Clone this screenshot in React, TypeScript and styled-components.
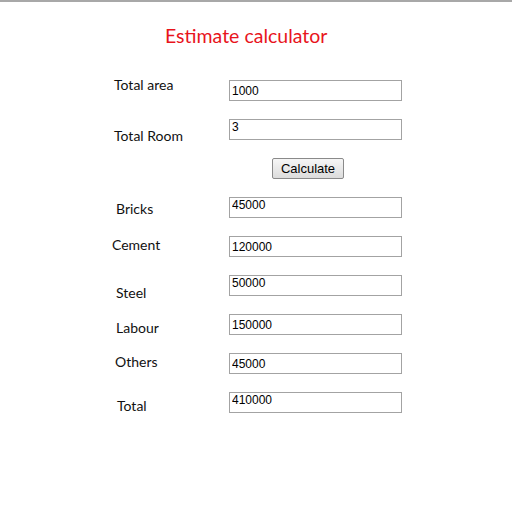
import React from "react";
import styled, { createGlobalStyle } from "styled-components";

const GlobalStyle = createGlobalStyle`
  html, body {
    margin: 0;
    padding: 0;
    background: #ffffff;
  }
`;

const Page = styled.div`
  width: 512px;
  min-height: 512px;
  border-top: 2px solid #a8a8a8;
  box-sizing: border-box;
  font-family: Lato, "Open Sans", sans-serif;
`;

const Title = styled.h2`
  margin: 0;
  padding-top: 21px;
  padding-left: 165px;
  font-family: Lato, "Open Sans", sans-serif;
  font-weight: normal;
  font-size: 19.5px;
  line-height: 26px;
  color: #e8141c;
`;

const Form = styled.div`
  display: grid;
  grid-template-columns: 117px 173px;
  grid-auto-rows: 39px;
  margin-top: 31px;
  margin-left: 112px;
`;

const Label = styled.div<{ $dy: number; $dx: number }>`
  font-family: Lato, "Open Sans", sans-serif;
  font-size: 14px;
  line-height: 20px;
  color: #111;
  margin-top: ${(p) => p.$dy}px;
  padding-left: ${(p) => p.$dx}px;
`;

const Field = styled.input<{ $top?: boolean }>`
  display: block;
  box-sizing: border-box;
  width: 173px;
  height: 21px;
  margin: 0;
  border: 1px solid #a3a3a3;
  padding: ${(p) => (p.$top ? "0 2px 5px" : "1px 2px 0")};
  font-family: "Liberation Sans", Arial, sans-serif;
  font-size: 12px;
  color: #000;
  background: #fff;
  outline: none;
`;

const ButtonCell = styled.div`
  grid-column: 2;
  padding-left: 43px;
`;

const Button = styled.button`
  display: block;
  box-sizing: border-box;
  width: 72px;
  height: 21px;
  padding: 0;
  border: 1px solid #8a8a8a;
  border-radius: 2px;
  background: linear-gradient(#f6f6f6, #dcdcdc);
  font-family: "Liberation Sans", Arial, sans-serif;
  font-size: 13px;
  color: #000;
`;

const rows = [
  { label: "Total area", value: "1000", dy: -5, dx: 2 },
  { label: "Total Room", value: "3", dy: 7, dx: 2, top: true },
];

const results = [
  { label: "Bricks", value: "45000", dy: 2, dx: 4, top: true },
  { label: "Cement", value: "120000", dy: -1, dx: 0 },
  { label: "Steel", value: "50000", dy: 8, dx: 4, top: true },
  { label: "Labour", value: "150000", dy: 4, dx: 4 },
  { label: "Others", value: "45000", dy: -1, dx: 3 },
  { label: "Total", value: "410000", dy: 4, dx: 5, top: true },
];

export default function App() {
  return (
    <>
      <GlobalStyle />
      <Page>
        <Title>Estimate calculator</Title>
        <Form>
          {rows.map((r) => (
            <React.Fragment key={r.label}>
              <Label $dy={r.dy} $dx={r.dx}>{r.label}</Label>
              <div>
                <Field $top={r.top} defaultValue={r.value} />
              </div>
            </React.Fragment>
          ))}
          <ButtonCell>
            <Button type="button">Calculate</Button>
          </ButtonCell>
          {results.map((r) => (
            <React.Fragment key={r.label}>
              <Label $dy={r.dy} $dx={r.dx}>{r.label}</Label>
              <div>
                <Field $top={r.top} defaultValue={r.value} />
              </div>
            </React.Fragment>
          ))}
        </Form>
      </Page>
    </>
  );
}
